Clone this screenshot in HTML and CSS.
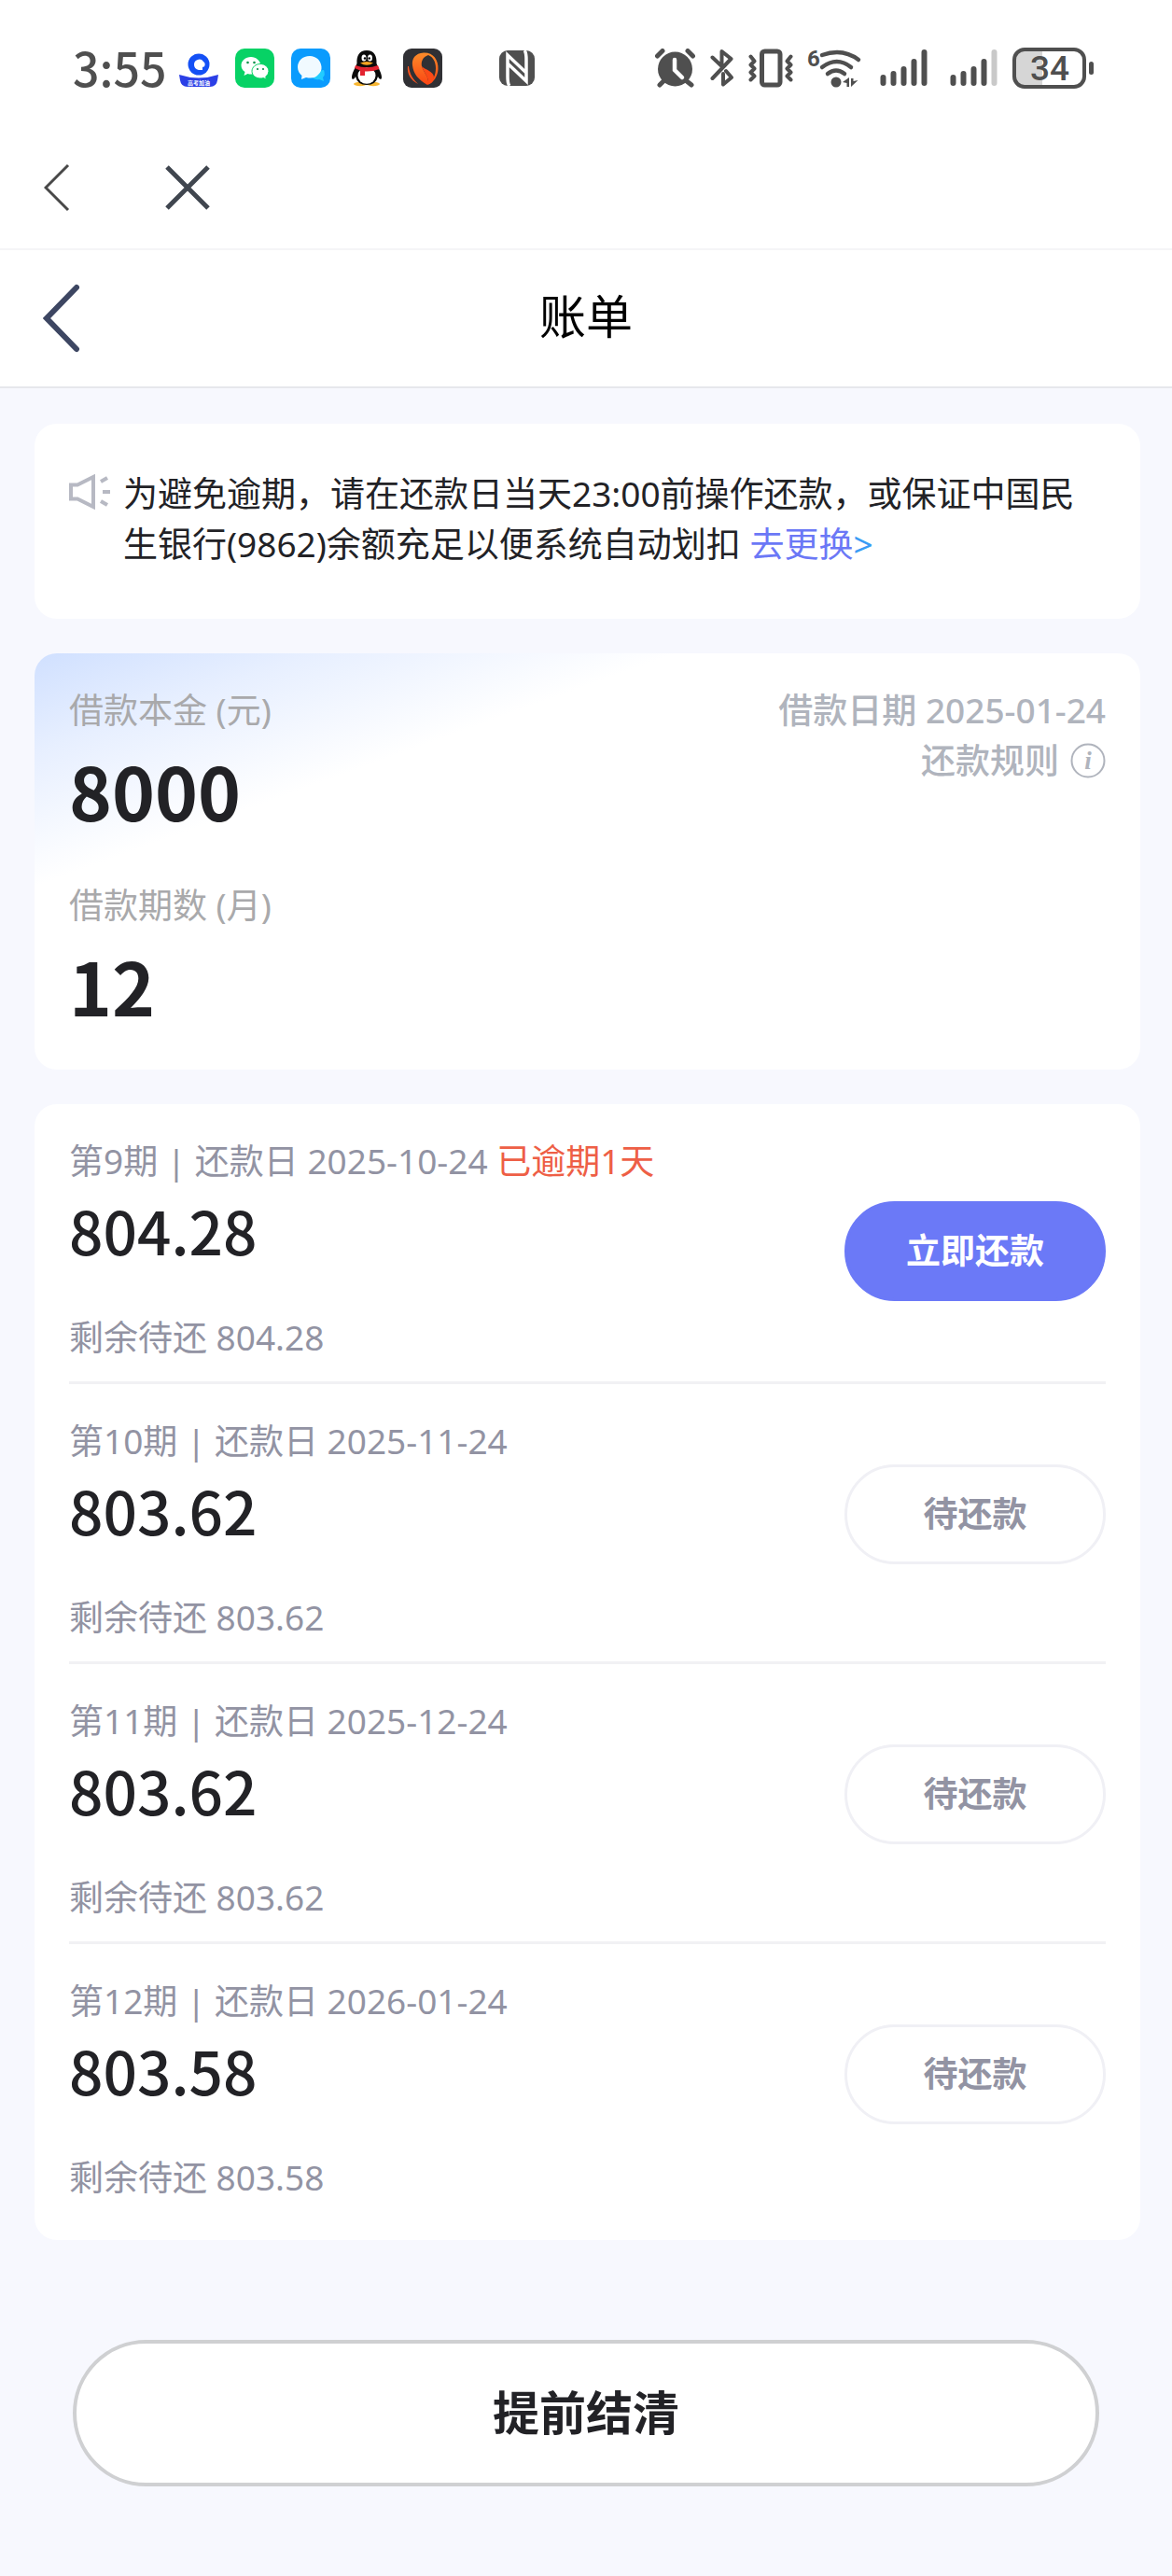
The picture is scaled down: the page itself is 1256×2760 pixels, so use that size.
FILE: index.html
```html
<!DOCTYPE html>
<html lang="zh-CN">
<head>
    <meta charset="UTF-8">
    <meta name="viewport" content="width=device-width, initial-scale=1.0">
    <title>账单</title>
    <link rel="stylesheet" href="styles.css">
</head>
<body>

    <!-- Status bar -->
    <div class="status-bar">
        <div class="status-left">
            <span class="time">3:55</span>
            <svg width="42" height="42" viewBox="0 0 42 42">
                <circle cx="21" cy="17" r="11.500" fill="#1450f5"/>
                <path d="M16 17a5.500 5.500 0 0 1 10-3 3.500 3.500 0 0 1 0 6l-1-.5v3.500h-4a5.500 5.500 0 0 1-5-6z" fill="#fff"/>
                <path d="M0 28q21 7 42 0l-1 6q-1 7-8 7H9q-7 0-8-7z" fill="#2b3fe6"/>
                <text x="21" y="39" class="badge-text">高考加油</text>
            </svg>
            <svg width="42" height="42" viewBox="0 0 42 42">
                <rect width="42" height="42" rx="10" fill="#07d265"/>
                <path d="M17 9c-6 0-10.500 4-10.500 9 0 3 1.500 5.500 4 7l-1 4 4-2q2 .6 4 .5 9.500-1 10-9.500c-.5-5-5-9-10.500-9z" fill="#fff"/>
                <path d="M27 16.500c-5 0-9 3.500-9 7.800s4 7.700 9 7.700q2 0 3.500-.5l3 1.700-.8-3q3.300-2.500 3.300-5.900c0-4.300-4-7.800-9-7.800z" fill="#fff" stroke="#07d265"/>
                <g fill="#078f48"><circle cx="13.500" cy="15" r="1.300"/><circle cx="20.500" cy="15" r="1.300"/><circle cx="24" cy="22" r="1.100"/><circle cx="30" cy="22" r="1.100"/></g>
            </svg>
            <svg width="42" height="42" viewBox="0 0 42 42">
                <rect width="42" height="42" rx="10" fill="#0a9bfd"/>
                <path d="M26 24q4 0 9-1 2 5-1 8l1 4-5-2q-5 1-8-3z" fill="#22ccff"/>
                <path d="M20 8C12 8 7 13.500 7 20c0 4 2 7 4.500 9L11 33l5-2q9 2 13-3 4-3.500 3.500-8.500C32 13 27 8 20 8z" fill="#f1faff"/>
            </svg>
            <svg width="42" height="42" viewBox="0 0 42 42">
                <ellipse cx="14" cy="38" rx="7" ry="2.200" fill="#f7b632"/>
                <ellipse cx="28" cy="38" rx="7" ry="2.200" fill="#f7b632"/>
                <path d="M21 2C13 2 10 8 10.500 16L6 26q-2 6 0 7 2 0 3-3 2 9 12 9t12-9q1 3 3 3 2-1 0-7l-4.500-10C32 8 29 2 21 2z" fill="#0b0b0b"/>
                <ellipse cx="21" cy="29" rx="9.500" ry="8.700" fill="#fff"/>
                <ellipse cx="18" cy="10" rx="2.500" ry="3.500" fill="#fff"/><ellipse cx="24.500" cy="10" rx="2.500" ry="3.500" fill="#fff"/>
                <circle cx="19" cy="10.500" r="1.200"/><circle cx="23.700" cy="10.500" r="1.200"/>
                <path d="M14 15.500q7-3 14 0-7 4.500-14 0z" fill="#f7a521"/>
                <path d="M9 18q12 4.500 24 0l1.500 4Q27 25 19 24.500V29h-5v-5.500L8 21z" fill="#e32330"/>
            </svg>
            <svg width="42" height="42" viewBox="0 0 42 42">
                <defs>
                    <linearGradient id="flame" x1="0" y1="0" x2="0" y2="1">
                        <stop offset="0" stop-color="#fb8c2a"/>
                        <stop offset="1" stop-color="#fb4412"/>
                    </linearGradient>
                </defs>
                <rect width="42" height="42" rx="9" fill="#303034"/>
                <path d="M22 4.500C13 5 9 11 10 18c1 9 6 15 16 21 7-3 11-9 11.500-17C38 12 32 4 22 4.500z" fill="url(#flame)"/>
                <path d="M27 7c-6 2-8 7-7 12 2 7 8 11 7 19 5-4 8-9 8-17 0-7-3-12-8-14z" fill="#303034"/>
                <path d="M20 19c2 7 8 11 7 19.500q6-2 6-8c0-6-10-8-13-11.500z" fill="#fb4a16"/>
                <path d="M5 19c-1 8 3 15 11 19-5-5-9-10-10-19z" fill="#f9541f"/>
            </svg>
            <svg class="nfc" width="38" height="38" viewBox="0 0 38 38">
                <rect width="38" height="38" rx="9" fill="#4f4f4f"/>
                <path d="M11 38Q9 36 9 28V5l20 19V10M27 0q2 2 2 10v23L9 14" fill="none" stroke="#fff" stroke-width="3.500"/>
            </svg>
        </div>
        <div class="status-right">
            <svg width="44" height="42" viewBox="0 0 44 42">
                <circle cx="21.500" cy="22" r="18.500" fill="#4f4f4f"/>
                <path d="M2.500 8L8 2.500M35 2.500L40.500 8M9 35l-4 4M34 35l5 4" stroke="#4f4f4f" stroke-width="5" stroke-linecap="round"/>
                <path d="M21 12v11l8 8" fill="none" stroke="#fff" stroke-width="4.500" stroke-linecap="round"/>
            </svg>
            <svg width="26" height="42" viewBox="0 0 26 42" class="line-icon">
                <path d="M2.500 9.500L12.500 19V3l10 8L2.500 32M17 24l6 7-9 7.500V27"/>
            </svg>
            <svg width="48" height="42" viewBox="0 0 48 42" class="line-icon">
                <rect x="14.500" y="3" width="19.500" height="36" rx="3" stroke-width="5"/>
                <path d="M2.500 8.500l4 5-4 4 4 4-4 4 4 4-4 4M45.500 8.500l-4 5 4 4-4 4 4 4-4 4 4 4"/>
            </svg>
            <svg width="63" height="56" viewBox="0 -6 63 56">
                <text x="0" y="20" class="wifi-text">6</text>
                <path d="M16 8q22-8 39 5M16 21q16-12 31 0M22 28q9-7 18 0" fill="none" stroke="#4f4f4f" stroke-width="4.500" stroke-linecap="round"/>
                <circle cx="31" cy="37" r="5.500" fill="#4f4f4f"/>
                <path d="M38 37l7-5v10h-2.500v-4zM47 33h2.500v3l5-1-7.500 7z" fill="#4f4f4f"/>
            </svg>
            <svg width="60" height="42" viewBox="0 0 60 42" class="signal">
                <path d="M3.500 31v6M14.500 27v10M25.500 22v15M36.500 14v23M47.500 4v33"/>
            </svg>
            <svg width="52" height="42" viewBox="0 0 52 42" class="signal">
                <path d="M3.500 31v6M14.500 27v10M25.500 22v15M36.500 14v23"/>
                <path d="M47.500 4v33" class="signal-off"/>
            </svg>
            <svg width="88" height="56" viewBox="0 -6 88 56">
                <path d="M14 2h18v40H14Q2 42 2 30V14Q2 2 14 2z" fill="#d6d6d6"/>
                <rect x="2" y="2" width="75" height="40" rx="11" fill="none" stroke="#4f4f4f" stroke-width="4"/>
                <rect x="82" y="15" width="5" height="14" rx="2.500" fill="#4f4f4f"/>
                <text x="40" y="35" class="battery-text">34</text>
            </svg>
        </div>
    </div>

    <!-- Webview toolbar -->
    <div class="toolbar">
        <button type="button" aria-label="后退">
            <svg width="28" height="52" viewBox="0 0 28 52"><path d="M26 2L2 26l24 24" fill="none" stroke="#484848" stroke-width="3"/></svg>
        </button>
        <button type="button" aria-label="关闭">
            <svg width="48" height="48" viewBox="0 0 48 48"><path d="M2 2l44 44M46 2L2 46" stroke="#40464f" stroke-width="5"/></svg>
        </button>
    </div>

    <!-- Page header -->
    <header class="page-header">
        <button type="button" aria-label="返回">
            <svg width="40" height="74" viewBox="0 0 40 74"><path d="M36 4L4 37l32 33" fill="none" stroke="#3d4662" stroke-width="6" stroke-linecap="round"/></svg>
        </button>
        <h1>账单</h1>
    </header>

    <main class="content">
        <section class="card notice">
            <svg width="44" height="38" viewBox="0 0 44 38" fill="none" stroke="#b7b9c3" stroke-width="4">
                <path d="M2 11.500H9L26 3v32L9 26.500H2zM34 8l7-4M36 19h8M34 29l7 4"/>
            </svg>
            <p>为避免逾期，请在还款日当天23:00前操作还款，或保证中国民生银行(9862)余额充足以便系统自动划扣 <a href="#">去更换<span class="arrow">&gt;</span></a></p>
        </section>

        <section class="card loan">
            <dl>
                <dt>借款本金 (元)</dt>
                <dd>8000</dd>
                <dt>借款期数 (月)</dt>
                <dd>12</dd>
            </dl>
            <div class="loan-info">
                <p>借款日期 2025-01-24</p>
                <a href="#">还款规则
                    <svg width="38" height="38" viewBox="0 0 38 38">
                        <circle cx="19" cy="19" r="17.500" fill="none" stroke="#b0b4bd" stroke-width="2"/>
                        <text x="19" y="28" class="info-text">i</text>
                    </svg>
                </a>
            </div>
        </section>

        <ul class="card plan">
            <li class="overdue">
                <div>
                    <p class="term">第9期 | 还款日 2025-10-24 <span>已逾期1天</span></p>
                    <p class="amount">804.28</p>
                    <p class="remain">剩余待还 804.28</p>
                </div>
                <button type="button" class="pill pay">立即还款</button>
            </li>
            <li>
                <div>
                    <p class="term">第10期 | 还款日 2025-11-24</p>
                    <p class="amount">803.62</p>
                    <p class="remain">剩余待还 803.62</p>
                </div>
                <button type="button" class="pill">待还款</button>
            </li>
            <li>
                <div>
                    <p class="term">第11期 | 还款日 2025-12-24</p>
                    <p class="amount">803.62</p>
                    <p class="remain">剩余待还 803.62</p>
                </div>
                <button type="button" class="pill">待还款</button>
            </li>
            <li>
                <div>
                    <p class="term">第12期 | 还款日 2026-01-24</p>
                    <p class="amount">803.58</p>
                    <p class="remain">剩余待还 803.58</p>
                </div>
                <button type="button" class="pill">待还款</button>
            </li>
        </ul>

        <button type="button" class="settle">提前结清</button>
    </main>

</body>
</html>
```
FILE: styles.css
```css
* {
    box-sizing: border-box;
    margin: 0;
    padding: 0;
}

body {
    font-family: "Noto Sans", "Noto Sans CJK SC", sans-serif;
    font-size: 37px;
    line-height: 54px;
    color: #222226;
    background: #f7f8fe;
}

button {
    font-family: inherit;
    font-size: inherit;
    border: none;
    background: none;
    cursor: pointer;
}

svg {
    display: block;
    flex: none;
}

a {
    text-decoration: none;
}

/* Status bar */
.status-bar {
    display: flex;
    justify-content: space-between;
    align-items: center;
    height: 135px;
    padding: 11px 83px 0 78px;
    background: #fff;
}

.status-left,
.status-right {
    display: flex;
    align-items: center;
}

.status-left {
    gap: 18px;
}

.status-right {
    gap: 15px;
}

.time {
    width: 96px;
    padding-bottom: 4px;
    font: 500 50px/60px "Noto Sans CJK SC", sans-serif;
    color: #4f4f4f;
    white-space: nowrap;
}

.nfc {
    margin-left: 43px;
}

.line-icon {
    fill: none;
    stroke: #4f4f4f;
    stroke-width: 4;
    stroke-linecap: round;
    stroke-linejoin: round;
}

.signal {
    fill: none;
    stroke: #4f4f4f;
    stroke-width: 6;
    stroke-linecap: round;
}

.signal-off {
    stroke: #c9c9c9;
}

.badge-text {
    font: 700 6px "Noto Sans CJK SC", sans-serif;
    fill: #fff;
    text-anchor: middle;
}

.wifi-text {
    font: 700 24px Roboto, sans-serif;
    fill: #4f4f4f;
}

.battery-text {
    font: 500 37px Roboto, sans-serif;
    fill: #4f4f4f;
    text-anchor: middle;
}

/* Toolbar and header */
.toolbar {
    display: flex;
    align-items: center;
    gap: 102px;
    height: 133px;
    padding: 0 47px;
    background: #fff;
    border-bottom: 2px solid #f5f5f7;
}

.page-header {
    display: grid;
    grid-template-columns: 1fr auto 1fr;
    align-items: center;
    height: 148px;
    padding: 0 46px;
    background: #fff;
    border-bottom: 2px solid #e6e7ec;
}

.page-header button {
    justify-self: start;
}

.page-header h1 {
    padding-bottom: 4px;
    font-size: 50px;
    font-weight: 400;
    line-height: 72px;
    color: #000;
}

/* Cards */
.content {
    display: flex;
    flex-direction: column;
    gap: 37px;
    padding: 38px 34px 96px 37px;
}

.card {
    background: #fff;
    border-radius: 24px;
    padding: 0 37px;
}

.notice {
    display: flex;
    gap: 14px;
    padding-top: 48px;
    padding-bottom: 53px;
}

.notice svg {
    margin-top: 6px;
}

.notice a {
    color: #6b78f6;
}

.notice .arrow {
    color: #3a9cf5;
}

.loan {
    display: flex;
    justify-content: space-between;
    padding-top: 34px;
    padding-bottom: 41px;
    background: linear-gradient(160deg, #d0e0ff 0, #e7efff 100px, #fff 235px);
}

.loan dt {
    color: #a9a9ab;
}

.loan dd {
    margin: 8px 0 47px;
    font: 700 78px/100px "Noto Sans CJK SC", sans-serif;
}

.loan dd:last-child {
    margin-bottom: 0;
}

.loan-info,
.loan-info a {
    font-weight: 500;
    color: #b0b4bd;
}

.loan-info a {
    display: flex;
    justify-content: flex-end;
    align-items: center;
    gap: 12px;
}

.info-text {
    font: italic 700 27px "Liberation Serif", serif;
    fill: #b0b4bd;
    text-anchor: middle;
}

/* Repayment plan */
.plan {
    list-style: none;
    padding-bottom: 20px;
}

.plan li {
    display: flex;
    justify-content: space-between;
    align-items: flex-start;
    padding: 34px 0 20px;
    border-bottom: 3px solid #f1f1f4;
}

.plan li:last-child {
    border-bottom: none;
}

.term,
.remain {
    color: #9293a3;
}

.term span {
    color: #ee5f46;
}

.amount {
    margin: 6px 0 49px;
    font: 500 64px/80px "Noto Sans CJK SC", sans-serif;
}

.pill {
    width: 280px;
    height: 107px;
    margin-top: 52px;
    padding-bottom: 6px;
    border: 3px solid #f0f0f5;
    border-radius: 54px;
    font-weight: 700;
    color: #9293a3;
}

.overdue .pill {
    margin-top: 70px;
}

.pay {
    border-color: #6b79f7;
    background: #6b79f7;
    color: #fff;
}

.settle {
    height: 157px;
    margin: 70px 44px 0 41px;
    padding-bottom: 6px;
    border: 4px solid #cfd0d2;
    border-radius: 79px;
    background: #fff;
    font-size: 50px;
    font-weight: 700;
    color: #222226;
}
```
